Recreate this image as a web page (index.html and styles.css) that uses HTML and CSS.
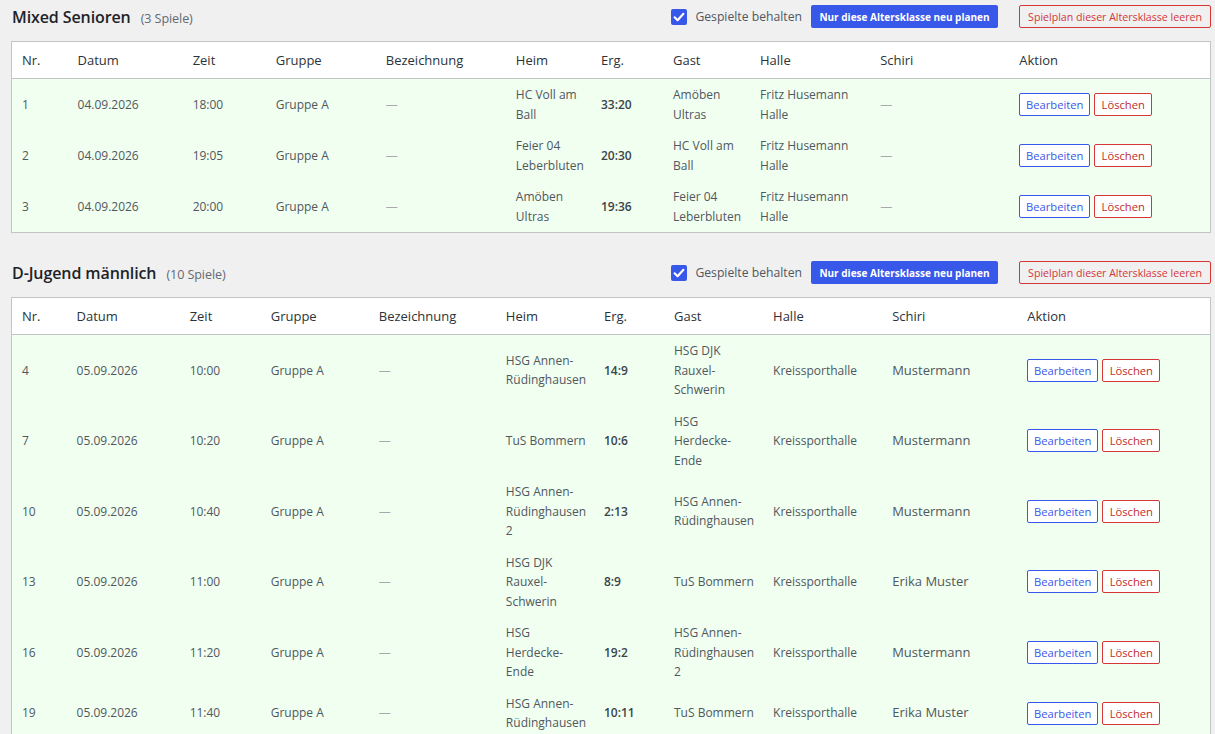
FILE: index.html
```html
<!DOCTYPE html>
<html lang="de">
<head>
<meta charset="utf-8">
<title>Spielplan</title>
<link rel="stylesheet" href="styles.css">
</head>
<body>
<div class="page">

<section class="group">
  <div class="group-head">
    <h2 class="group-title">Mixed Senioren <span class="count">(3 Spiele)</span></h2>
    <div class="group-tools">
      <label class="keep"><span class="check"><svg viewBox="0 0 16 16" width="16" height="16"><path d="M3.6 8.3 6.6 11.2 12.4 4.8" fill="none" stroke="#fff" stroke-width="2.1" stroke-linecap="round" stroke-linejoin="round"/></svg></span>Gespielte behalten</label>
      <button class="btn-primary">Nur diese Altersklasse neu planen</button>
      <button class="btn-danger">Spielplan dieser Altersklasse leeren</button>
    </div>
  </div>
  <table class="games t1">
    <colgroup>
      <col class="c-nr"><col class="c-datum"><col class="c-zeit"><col class="c-gruppe"><col class="c-bez"><col class="c-heim"><col class="c-erg"><col class="c-gast"><col class="c-halle"><col class="c-schiri"><col class="c-aktion">
    </colgroup>
    <thead>
      <tr><th>Nr.</th><th>Datum</th><th>Zeit</th><th>Gruppe</th><th>Bezeichnung</th><th>Heim</th><th>Erg.</th><th>Gast</th><th>Halle</th><th>Schiri</th><th>Aktion</th></tr>
    </thead>
    <tbody>
      <tr><td>1</td><td>04.09.2026</td><td>18:00</td><td>Gruppe A</td><td class="dash">—</td><td>HC Voll am Ball</td><td class="erg">33:20</td><td>Amöben Ultras</td><td>Fritz Husemann Halle</td><td class="dash">—</td><td><div class="actions"><button class="btn-edit">Bearbeiten</button><button class="btn-del">Löschen</button></div></td></tr>
      <tr><td>2</td><td>04.09.2026</td><td>19:05</td><td>Gruppe A</td><td class="dash">—</td><td>Feier 04 Leberbluten</td><td class="erg">20:30</td><td>HC Voll am Ball</td><td>Fritz Husemann Halle</td><td class="dash">—</td><td><div class="actions"><button class="btn-edit">Bearbeiten</button><button class="btn-del">Löschen</button></div></td></tr>
      <tr><td>3</td><td>04.09.2026</td><td>20:00</td><td>Gruppe A</td><td class="dash">—</td><td>Amöben Ultras</td><td class="erg">19:36</td><td>Feier 04 Leberbluten</td><td>Fritz Husemann Halle</td><td class="dash">—</td><td><div class="actions"><button class="btn-edit">Bearbeiten</button><button class="btn-del">Löschen</button></div></td></tr>
    </tbody>
  </table>
</section>

<section class="group">
  <div class="group-head">
    <h2 class="group-title">D-Jugend männlich <span class="count">(10 Spiele)</span></h2>
    <div class="group-tools">
      <label class="keep"><span class="check"><svg viewBox="0 0 16 16" width="16" height="16"><path d="M3.6 8.3 6.6 11.2 12.4 4.8" fill="none" stroke="#fff" stroke-width="2.1" stroke-linecap="round" stroke-linejoin="round"/></svg></span>Gespielte behalten</label>
      <button class="btn-primary">Nur diese Altersklasse neu planen</button>
      <button class="btn-danger">Spielplan dieser Altersklasse leeren</button>
    </div>
  </div>
  <table class="games t2">
    <colgroup>
      <col class="c-nr"><col class="c-datum"><col class="c-zeit"><col class="c-gruppe"><col class="c-bez"><col class="c-heim"><col class="c-erg"><col class="c-gast"><col class="c-halle"><col class="c-schiri"><col class="c-aktion">
    </colgroup>
    <thead>
      <tr><th>Nr.</th><th>Datum</th><th>Zeit</th><th>Gruppe</th><th>Bezeichnung</th><th>Heim</th><th>Erg.</th><th>Gast</th><th>Halle</th><th>Schiri</th><th>Aktion</th></tr>
    </thead>
    <tbody>
      <tr><td>4</td><td>05.09.2026</td><td>10:00</td><td>Gruppe A</td><td class="dash">—</td><td>HSG Annen-Rüdinghausen</td><td class="erg">14:9</td><td>HSG DJK Rauxel-Schwerin</td><td>Kreissporthalle</td><td class="ref">Mustermann</td><td><div class="actions"><button class="btn-edit">Bearbeiten</button><button class="btn-del">Löschen</button></div></td></tr>
      <tr><td>7</td><td>05.09.2026</td><td>10:20</td><td>Gruppe A</td><td class="dash">—</td><td>TuS Bommern</td><td class="erg">10:6</td><td>HSG Herdecke-Ende</td><td>Kreissporthalle</td><td class="ref">Mustermann</td><td><div class="actions"><button class="btn-edit">Bearbeiten</button><button class="btn-del">Löschen</button></div></td></tr>
      <tr><td>10</td><td>05.09.2026</td><td>10:40</td><td>Gruppe A</td><td class="dash">—</td><td>HSG Annen-Rüdinghausen 2</td><td class="erg">2:13</td><td>HSG Annen-Rüdinghausen</td><td>Kreissporthalle</td><td class="ref">Mustermann</td><td><div class="actions"><button class="btn-edit">Bearbeiten</button><button class="btn-del">Löschen</button></div></td></tr>
      <tr><td>13</td><td>05.09.2026</td><td>11:00</td><td>Gruppe A</td><td class="dash">—</td><td>HSG DJK Rauxel-Schwerin</td><td class="erg">8:9</td><td>TuS Bommern</td><td>Kreissporthalle</td><td class="ref">Erika Muster</td><td><div class="actions"><button class="btn-edit">Bearbeiten</button><button class="btn-del">Löschen</button></div></td></tr>
      <tr><td>16</td><td>05.09.2026</td><td>11:20</td><td>Gruppe A</td><td class="dash">—</td><td>HSG Herdecke-Ende</td><td class="erg">19:2</td><td>HSG Annen-Rüdinghausen 2</td><td>Kreissporthalle</td><td class="ref">Mustermann</td><td><div class="actions"><button class="btn-edit">Bearbeiten</button><button class="btn-del">Löschen</button></div></td></tr>
      <tr><td>19</td><td>05.09.2026</td><td>11:40</td><td>Gruppe A</td><td class="dash">—</td><td>HSG Annen-Rüdinghausen</td><td class="erg">10:11</td><td>TuS Bommern</td><td>Kreissporthalle</td><td class="ref">Erika Muster</td><td><div class="actions"><button class="btn-edit">Bearbeiten</button><button class="btn-del">Löschen</button></div></td></tr>
    </tbody>
  </table>
</section>

</div>
</body>
</html>
```

FILE: styles.css
```css
html, body {
  margin: 0;
  padding: 0;
  background: #f0f0f1;
}

body {
  font-family: "Open Sans", "Noto Sans", "Liberation Sans", sans-serif;
  color: #50575e;
}

.page {
  width: 1200px;
  padding: 5px 0 0 11px;
  display: flex;
  flex-direction: column;
  gap: 28px;
}

.group-head {
  display: flex;
  align-items: center;
  justify-content: space-between;
  height: 23px;
  margin-bottom: 13px;
}

.group-title {
  margin: 0 0 0 1px;
  font-size: 16px;
  font-weight: 600;
  color: #1d2327;
  letter-spacing: -0.1px;
}

.group-title .count {
  font-size: 12.6px;
  font-weight: 400;
  color: #646970;
  margin-left: 6px;
}

.group-tools {
  display: flex;
  align-items: center;
}

.keep {
  display: flex;
  align-items: center;
  gap: 8px;
  font-size: 12.2px;
  color: #50575e;
  margin-right: 9px;
}

.check {
  width: 16px;
  height: 16px;
  border-radius: 2px;
  background: #3858e9;
  display: block;
  margin-left: 1px;
}

.check svg {
  display: block;
}

button {
  font-family: inherit;
  cursor: pointer;
  box-sizing: border-box;
}

.btn-primary {
  height: 23px;
  width: 187px;
  padding: 0;
  border: 0;
  border-radius: 2px;
  background: #3858e9;
  color: #fff;
  font-size: 10px;
  font-weight: 700;
  margin-right: 21px;
}

.btn-danger {
  height: 23px;
  width: 192px;
  padding: 0;
  border: 1px solid #d63638;
  border-radius: 2px;
  background: transparent;
  color: #d63638;
  font-size: 10.6px;
}

.games {
  width: 1200px;
  border-collapse: collapse;
  table-layout: fixed;
  border: 1px solid #c3c4c7;
}

.games th {
  background: #fff;
  text-align: left;
  font-weight: 400;
  font-size: 13px;
  color: #2c3338;
  line-height: 20px;
  padding: 8px 6px 8px 10px;
  border-bottom: 1px solid #c3c4c7;
}

.games td {
  background: #f0fff0;
  font-size: 12px;
  line-height: 19.5px;
  padding: 6px 6px 6px 10px;
  vertical-align: middle;
  color: #50575e;
}

.games td.dash {
  color: #a7aaad;
}

.games td.erg {
  font-weight: 600;
  color: #3c434a;
}

.games td.ref {
  font-size: 13px;
  color: #50575e;
}

.actions {
  display: flex;
  gap: 4px;
}

.btn-edit,
.btn-del {
  height: 23px;
  padding: 0;
  border-radius: 2px;
  background: #fff;
  font-size: 11.2px;
}

.btn-edit {
  width: 71px;
  border: 1px solid #3858e9;
  color: #3858e9;
}

.btn-del {
  width: 58px;
  border: 1px solid #d63638;
  color: #c02b2b;
}

.t1 .c-nr { width: 56px; }
.t1 .c-datum { width: 115px; }
.t1 .c-zeit { width: 83px; }
.t1 .c-gruppe { width: 110px; }
.t1 .c-bez { width: 130px; }
.t1 .c-heim { width: 85px; }
.t1 .c-erg { width: 72px; }
.t1 .c-gast { width: 87px; }
.t1 .c-halle { width: 120px; }
.t1 .c-schiri { width: 139px; }
.t1 .c-aktion { width: 201px; }

.t2 .c-nr { width: 55px; }
.t2 .c-datum { width: 113px; }
.t2 .c-zeit { width: 81px; }
.t2 .c-gruppe { width: 108px; }
.t2 .c-bez { width: 127px; }
.t2 .c-heim { width: 98px; }
.t2 .c-erg { width: 70px; }
.t2 .c-gast { width: 99px; }
.t2 .c-halle { width: 119px; }
.t2 .c-schiri { width: 135px; }
.t2 .c-aktion { width: 193px; }
```
